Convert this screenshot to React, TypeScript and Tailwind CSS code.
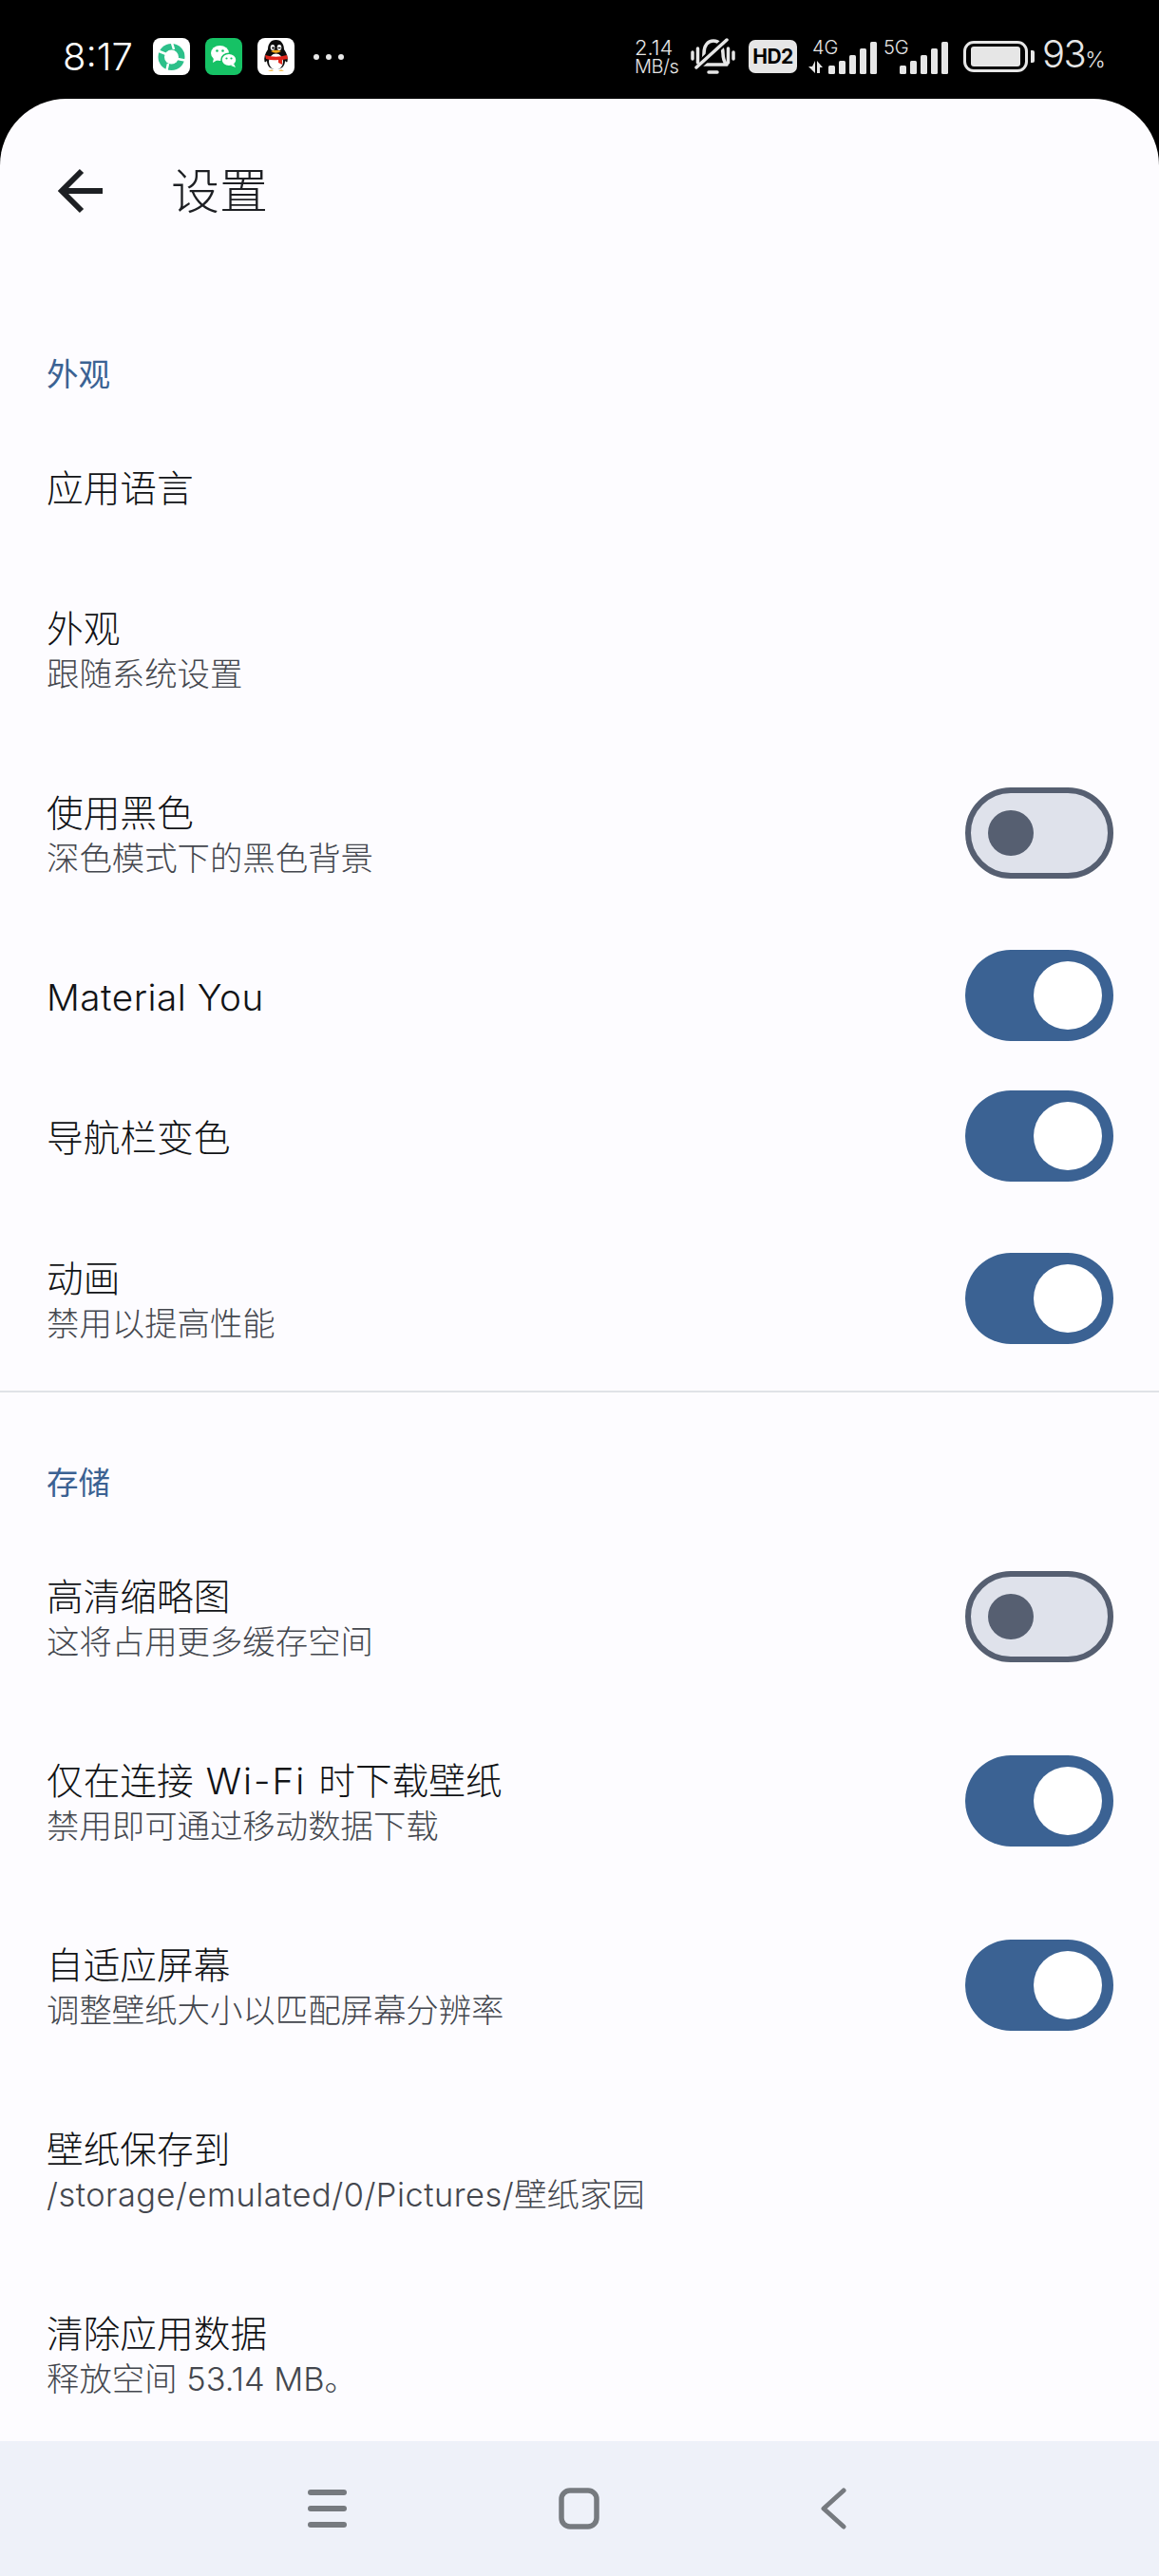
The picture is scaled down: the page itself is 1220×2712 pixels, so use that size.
import React from 'react'

const font = "font-['Inter','Noto_Sans_CJK_SC',sans-serif]"

const Toggle = ({ on }: { on: boolean }) =>
  on ? (
    <div className="flex items-center justify-end w-[156px] h-[96px] rounded-full bg-[#3b6293] pr-3 shrink-0">
      <div className="w-[72px] h-[72px] rounded-full bg-white" />
    </div>
  ) : (
    <div className="flex items-center w-[156px] h-[96px] rounded-full bg-[#dfe2eb] border-[6px] border-[#565f71] pl-[18px] shrink-0">
      <div className="w-[48px] h-[48px] rounded-full bg-[#565f71]" />
    </div>
  )

interface RowProps {
  title: React.ReactNode
  sub?: React.ReactNode
  toggle?: boolean
}

const Row = ({ title, sub, toggle }: RowProps) => (
  <div className={`flex items-center justify-between pl-[49px] pr-[48px] ${sub ? 'h-[194px]' : 'h-[148px]'}`}>
    <div className="pt-[3px]">
      <div className="text-[38.7px] leading-[50px] text-[#111316] font-light">{title}</div>
      {sub && <div className="text-[34.4px] leading-[46px] text-[#44474e] font-light">{sub}</div>}
    </div>
    {toggle !== undefined && <Toggle on={toggle} />}
  </div>
)

const SectionLabel = ({ text }: { text: string }) => (
  <div className="pl-[49px] text-[33.5px] leading-[46px] text-[#3b6293]">{text}</div>
)

const AppIcons = () => (
  <div className="flex items-center gap-[16px] ml-[21px]">
    <svg width="39" height="39" viewBox="0 0 39 39">
      <rect width="39" height="39" rx="8" fill="#fff" />
      <circle cx="19.500" cy="20" r="14" fill="#2cc08a" />
      <circle cx="19.500" cy="20" r="7.500" fill="#fff" />
      <path d="M4 13l10 4M19 2l3 10M36 24l-10-2M14 36l2-9" stroke="#fff" strokeWidth="2.500" />
    </svg>
    <svg width="39" height="39" viewBox="0 0 39 39">
      <rect width="39" height="39" rx="8" fill="#16c265" />
      <ellipse cx="15.500" cy="16" rx="9.500" ry="8" fill="#fff" />
      <path d="M9 21l-1 5 5-3z" fill="#fff" />
      <ellipse cx="25" cy="23" rx="8" ry="6.800" fill="#fff" stroke="#16c265" strokeWidth="1.500" />
      <path d="M30 27l2 4-5-2z" fill="#fff" />
      <circle cx="12.500" cy="13.500" r="1.300" fill="#16c265" />
      <circle cx="18.500" cy="13.500" r="1.300" fill="#16c265" />
      <circle cx="22.500" cy="21.500" r="1.100" fill="#16c265" />
      <circle cx="27.500" cy="21.500" r="1.100" fill="#16c265" />
    </svg>
    <svg width="39" height="39" viewBox="0 0 39 39">
      <rect width="39" height="39" rx="8" fill="#fff" />
      <path d="M19.500 2c6 0 8.500 5 8.500 10 3 4 4.500 9 3.500 13-1 1-2-.500-2.500-1 0 5-3 9-9.500 9s-9.500-4-9.500-9c-.500.500-1.500 2-2.500 1-1-4 .500-9 3.500-13 0-5 2.500-10 8.500-10z" fill="#0c0c0c" />
      <ellipse cx="19.500" cy="25" rx="7.500" ry="8.500" fill="#fff" />
      <ellipse cx="16" cy="10" rx="2.300" ry="3" fill="#fff" />
      <ellipse cx="23" cy="10" rx="2.300" ry="3" fill="#fff" />
      <circle cx="16.500" cy="10.500" r="1.200" fill="#111" />
      <path d="M21.500 10.500h3" stroke="#111" strokeWidth="1.200" />
      <path d="M14 14q5.500-2.500 11 0q-5.500 3.500-11 0z" fill="#f6a81c" />
      <path d="M8 18q11.500 3.500 23 0l1 4-6 1v5l-4-2v-3q-7 1-13-1z" fill="#e1251b" />
      <path d="M11 35h6l-2-2zM22 35h6l-3-2z" fill="#f6c25b" />
    </svg>
    <div className="flex gap-[7px] ml-[4px]">
      <span className="w-[6px] h-[6px] rounded-full bg-[#e8e8e8]" />
      <span className="w-[6px] h-[6px] rounded-full bg-[#e8e8e8]" />
      <span className="w-[6px] h-[6px] rounded-full bg-[#e8e8e8]" />
    </div>
  </div>
)

const Bars = () => (
  <svg width="51" height="34" viewBox="0 0 51 34" className="block">
    {[9, 14, 20, 27, 34].map((h, i) => (
      <rect key={i} x={i * 11} y={34 - h} width="7" height={h} rx="1.500" fill="#e6e6e6" />
    ))}
  </svg>
)

const SilentBell = () => (
  <svg width="47" height="40" viewBox="0 0 47 40" fill="none" stroke="#e6e6e6" strokeWidth="3.500" strokeLinecap="round" strokeLinejoin="round" className="ml-[12px]">
    <path d="M10 28c3-3 4-6 4-12 0-8 4-13 10-13s10 5 10 13c0 6 1 9 4 12z" />
    <path d="M6 31L39 1" stroke="#000" strokeWidth="8" />
    <path d="M6 31L38 2" />
    <path d="M19 36h9" />
    <path d="M2 15v7M7.500 11v15M39.500 11v15M45 15v7" />
  </svg>
)

const StatusRight = () => (
  <div className="flex items-center text-[#e6e6e6] font-light">
    <div className="text-[22px] leading-[20px] w-[47px] whitespace-nowrap">
      <div>2.14</div>
      <div className="text-[20px] tracking-[-0.5px]">MB/s</div>
    </div>
    <SilentBell />
    <div className="ml-[14px] w-[51px] h-[35px] rounded-[7px] bg-[#e6e6e6] text-black text-[21px] tracking-[-0.5px] leading-[35px] font-bold text-center">HD2</div>
    <div className="relative ml-[12px] w-[72px] h-[36px]">
      <span className="absolute left-[4px] -top-[2px] text-[20px] leading-[20px]">4G</span>
      <svg width="16" height="13" viewBox="0 0 16 13" className="absolute left-0 bottom-[1px]">
        <path d="M7 0v13L0 6h4zM9 0l6 7h-3l0 6H9z" fill="#e6e6e6" />
      </svg>
      <div className="absolute right-0 bottom-0">
        <Bars />
      </div>
    </div>
    <div className="relative ml-[7px] w-[68px] h-[36px]">
      <span className="absolute left-0 -top-[2px] text-[20px] leading-[20px]">5G</span>
      <div className="absolute right-0 bottom-0">
        <Bars />
      </div>
    </div>
    <div className="ml-[16px] flex items-center">
      <div className="w-[68px] h-[33px] rounded-[11px] border-[3px] border-[#e6e6e6] px-[5px] py-[3px]">
        <div className="w-full h-full rounded-[3px] bg-[#e6e6e6]" />
      </div>
      <div className="ml-[3px] w-[4px] h-[13px] rounded-r-[2px] bg-[#e6e6e6]" />
    </div>
    <div className="ml-[8px] text-[40px] leading-[44px] w-[65px] whitespace-nowrap tracking-[-1.5px]">
      93<span className="text-[23px] tracking-normal">%</span>
    </div>
  </div>
)

export default function App() {
  return (
    <div className={`flex flex-col w-[1220px] h-[2712px] bg-black overflow-hidden ${font}`}>
      <div className="flex items-center justify-between h-[104px] pl-[66px] pr-[58px] pt-[15px] shrink-0">
        <div className="flex items-center">
          <span className="w-[74px] text-[40px] text-white font-light whitespace-nowrap">8:17</span>
          <AppIcons />
        </div>
        <StatusRight />
      </div>

      <div className="flex-1 min-h-0 bg-[#fdfcff] rounded-t-[70px] overflow-hidden">
        <div className="flex items-center h-[193px] pl-[61px]">
          <svg width="48" height="48" viewBox="0 0 48 48" fill="none" stroke="#1d1f23" strokeWidth="6">
            <path d="M47 24H6M25 3L4 24l21 21" />
          </svg>
          <span className="ml-[71px] pt-[3px] text-[51px] text-[#1d1f23] font-light">设置</span>
        </div>

        <div className="pt-[74px] pb-[21px]">
          <SectionLabel text="外观" />
        </div>
        <Row title="应用语言" />
        <Row title="外观" sub="跟随系统设置" />
        <Row title="使用黑色" sub="深色模式下的黑色背景" toggle={false} />
        <Row title={<span className="tracking-[0.5px]">Material You</span>} toggle />
        <Row title="导航栏变色" toggle />
        <Row title="动画" sub="禁用以提高性能" toggle />
        <div className="h-[2px] bg-[#e0e2e7]" />

        <div className="pt-[72px] pb-[21px]">
          <SectionLabel text="存储" />
        </div>
        <Row title="高清缩略图" sub="这将占用更多缓存空间" toggle={false} />
        <Row
          title={
            <>
              仅在连接<span className="tracking-[2px]"> Wi-Fi </span>时下载壁纸
            </>
          }
          sub="禁用即可通过移动数据下载"
          toggle
        />
        <Row title="自适应屏幕" sub="调整壁纸大小以匹配屏幕分辨率" toggle />
        <Row
          title="壁纸保存到"
          sub={
            <>
              <span className="tracking-[0.5px]">/storage/emulated/0/Pictures/</span>壁纸家园
            </>
          }
        />
        <Row title="清除应用数据" sub="释放空间 53.14 MB。" />
      </div>

      <div className="flex items-center pl-[324px] h-[142px] bg-[#eef1f9] shrink-0">
        <div className="flex flex-col gap-[11px]">
          <div className="w-[41px] h-[6px] rounded-full bg-[#767a7f]" />
          <div className="w-[41px] h-[6px] rounded-full bg-[#767a7f]" />
          <div className="w-[41px] h-[6px] rounded-full bg-[#767a7f]" />
        </div>
        <svg width="43" height="44" viewBox="0 0 43 44" fill="none" stroke="#767a7f" strokeWidth="5.500" className="ml-[223px]">
          <rect x="3" y="3" width="37" height="38" rx="9" />
        </svg>
        <svg width="28" height="44" viewBox="0 0 28 44" fill="none" stroke="#767a7f" strokeWidth="5" strokeLinecap="round" strokeLinejoin="round" className="ml-[232px]">
          <path d="M25 3L4 22l21 19" />
        </svg>
      </div>
    </div>
  )
}
